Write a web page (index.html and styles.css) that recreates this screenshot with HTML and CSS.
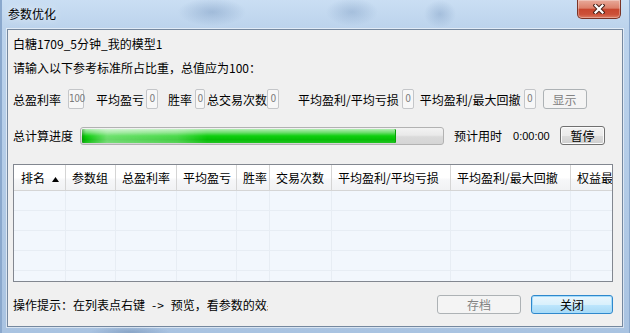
FILE: index.html
```html
<!DOCTYPE html>
<html lang="zh-CN">
<head>
    <meta charset="UTF-8">
    <title>参数优化</title>
    <link rel="stylesheet" href="styles.css">
</head>
<body>
    <div class="window">
        <!-- Title bar -->
        <div class="titlebar">
            <span class="title">参数优化</span>
            <button class="close-btn">
                <svg width="12" height="10" viewBox="0 0 12 10">
                    <path d="M2.5 1.5 L9.5 8.5 M9.5 1.5 L2.5 8.5" stroke="#4a2219" stroke-width="4.2" stroke-linecap="square"/>
                    <path d="M2.5 1.5 L9.5 8.5 M9.5 1.5 L2.5 8.5" stroke="#ffffff" stroke-width="2.2" stroke-linecap="square"/>
                </svg>
            </button>
        </div>

        <!-- Dialog body -->
        <div class="client">
            <div class="line">白糖1709_5分钟_我的模型1</div>
            <div class="line prompt">请输入以下参考标准所占比重，总值应为100：</div>

            <div class="weights">
                <span>总盈利率</span>
                <span class="box wide gap7">100</span>
                <span class="gap12">平均盈亏</span>
                <span class="box gap2">0</span>
                <span class="gap10">胜率</span>
                <span class="box narrow gap3">0</span>
                <span class="gap2">总交易次数</span>
                <span class="box">0</span>
                <span class="gap19">平均盈利/平均亏损</span>
                <span class="box gap3">0</span>
                <span class="gap6">平均盈利/最大回撤</span>
                <span class="box gap3">0</span>
                <button class="btn disabled show-btn">显示</button>
            </div>

            <div class="progress-row">
                <span>总计算进度</span>
                <div class="progress">
                    <div class="progress-fill" style="width: 87.3%"></div>
                </div>
                <span class="eta-label">预计用时</span>
                <span class="eta">0:00:00</span>
                <button class="btn pause-btn">暂停</button>
            </div>

            <!-- Result list -->
            <div class="list">
                <div class="list-head">
                    <div class="cell">排名<svg class="sort" width="7" height="5" viewBox="0 0 7 5"><path d="M3.5 0 L7 5 L0 5 Z" fill="#000"/></svg></div>
                    <div class="cell">参数组</div>
                    <div class="cell">总盈利率</div>
                    <div class="cell">平均盈亏</div>
                    <div class="cell">胜率</div>
                    <div class="cell">交易次数</div>
                    <div class="cell">平均盈利/平均亏损</div>
                    <div class="cell">平均盈利/最大回撤</div>
                    <div class="cell">权益最大回撤</div>
                </div>
                <div class="list-row"><div class="cell"></div><div class="cell"></div><div class="cell"></div><div class="cell"></div><div class="cell"></div><div class="cell"></div><div class="cell"></div><div class="cell"></div><div class="cell"></div></div>
                <div class="list-row"><div class="cell"></div><div class="cell"></div><div class="cell"></div><div class="cell"></div><div class="cell"></div><div class="cell"></div><div class="cell"></div><div class="cell"></div><div class="cell"></div></div>
                <div class="list-row"><div class="cell"></div><div class="cell"></div><div class="cell"></div><div class="cell"></div><div class="cell"></div><div class="cell"></div><div class="cell"></div><div class="cell"></div><div class="cell"></div></div>
                <div class="list-row"><div class="cell"></div><div class="cell"></div><div class="cell"></div><div class="cell"></div><div class="cell"></div><div class="cell"></div><div class="cell"></div><div class="cell"></div><div class="cell"></div></div>
                <div class="list-row"><div class="cell"></div><div class="cell"></div><div class="cell"></div><div class="cell"></div><div class="cell"></div><div class="cell"></div><div class="cell"></div><div class="cell"></div><div class="cell"></div></div>
            </div>

            <div class="footer">
                <span class="tip">操作提示：在列表点右键<span class="arrow">-&gt;</span>预览，看参数的效果</span>
                <button class="btn disabled save-btn">存档</button>
                <button class="btn default close-dlg">关闭</button>
            </div>
        </div>
    </div>
</body>
</html>
```

FILE: styles.css
```css
body {
    margin: 0;
    font-family: "Noto Sans CJK SC", "Liberation Sans", sans-serif;
    font-size: 12px;
    color: #000;
}

/* Aero frame */
.window {
    width: 630px;
    height: 333px;
    box-sizing: border-box;
    padding: 0 7px 6px 7px;
    display: flex;
    flex-direction: column;
    overflow: hidden;
    background:
        radial-gradient(ellipse 34px 14px at 212px 12px, rgba(95, 130, 175, 0.35), transparent),
        radial-gradient(ellipse 26px 14px at 352px 12px, rgba(95, 130, 175, 0.3), transparent),
        radial-gradient(ellipse 16px 14px at 440px 14px, rgba(95, 130, 175, 0.3), transparent),
        radial-gradient(ellipse 40px 6px at 130px 332px, rgba(80, 110, 150, 0.35), transparent),
        linear-gradient(to bottom, #cadef3 0, #bcd3ec 28px, #a9c3e1 100%);
    box-shadow: inset 2px 0 0 #8aa8cd, inset -1px 0 0 #8aa8cd;
}

.titlebar {
    height: 29px;
    display: flex;
    align-items: flex-start;
    flex-shrink: 0;
}

.title {
    margin: 6px 0 0 1px;
    line-height: 16px;
    text-shadow: 0 0 8px rgba(255, 255, 255, 0.9);
}

.close-btn {
    margin-left: auto;
    margin-right: 2px;
    width: 44px;
    height: 19px;
    padding: 0;
    border: 1px solid #7a3326;
    border-top: none;
    border-radius: 0 0 5px 5px;
    background: linear-gradient(to bottom, #e8aa9a 0%, #dc806a 45%, #c8472f 52%, #cc5139 80%, #dc7d64 100%);
    box-shadow: inset 0 0 0 1px rgba(255, 255, 255, 0.3);
    display: flex;
    align-items: center;
    justify-content: center;
}

/* Client area */
.client {
    flex: 1;
    border: 1px solid #75889f;
    background: #f0f0f0;
    padding: 6px 9px 0 5px;
    display: flex;
    flex-direction: column;
    box-shadow: 0 0 0 1px rgba(255, 255, 255, 0.55);
}

.line {
    height: 16px;
    line-height: 16px;
    white-space: nowrap;
}

.prompt {
    margin-top: 8px;
}

.weights {
    margin-top: 13px;
    height: 20px;
    display: flex;
    align-items: center;
    white-space: nowrap;
}

.box {
    box-sizing: border-box;
    width: 12px;
    height: 20px;
    border: 1px solid #c4c6c9;
    border-radius: 2px;
    background: #f7f7f7;
    color: #7a7a7a;
    font-family: "DejaVu Sans", sans-serif;
    font-stretch: condensed;
    font-size: 10px;
    line-height: 18px;
    text-align: center;
    letter-spacing: -0.5px;
}

.box.wide { width: 16px; }
.box.narrow { width: 10px; }

.gap2 { margin-left: 2px; }
.gap3 { margin-left: 3px; }
.gap6 { margin-left: 6px; }
.gap7 { margin-left: 7px; }
.gap10 { margin-left: 10px; }
.gap12 { margin-left: 12px; }
.gap19 { margin-left: 19px; }

/* Buttons */
.btn {
    box-sizing: border-box;
    height: 19px;
    padding: 0;
    font-family: inherit;
    font-size: 12px;
    line-height: 17px;
    color: #000;
    border: 1px solid #707070;
    border-radius: 3px;
    background: linear-gradient(to bottom, #f2f2f2 0%, #ebebeb 50%, #dddddd 51%, #cfcfcf 100%);
    box-shadow: inset 0 0 0 1px #fbfbfb;
}

.btn.disabled {
    border-color: #adb2b5;
    background: #f4f4f4;
    color: #838383;
    box-shadow: none;
}

.btn.default {
    border-color: #2f88cc;
    background: linear-gradient(to bottom, #eaf6fd 0%, #d9f0fc 50%, #bee6fd 51%, #a7d9f5 100%);
    box-shadow: inset 0 0 0 1px #a6dcfb;
}

.show-btn {
    width: 44px;
    height: 20px;
    margin-left: 7px;
}

/* Progress */
.progress-row {
    margin-top: 17px;
    height: 19px;
    display: flex;
    align-items: center;
    white-space: nowrap;
}

.progress {
    box-sizing: border-box;
    width: 364px;
    height: 18px;
    margin-left: 7px;
    padding: 1px;
    border: 1px solid #b2b2b2;
    border-radius: 3px;
    background: linear-gradient(to bottom, #f3f3f3 0%, #e9e9e9 45%, #dadada 55%, #d5d5d5 100%);
}

.progress-fill {
    height: 100%;
    border-radius: 1px;
    background:
        linear-gradient(to right, rgba(0, 90, 0, 0.35) 0, transparent 4px, rgba(255, 255, 255, 0.4) 25px, rgba(255, 255, 255, 0.25) 95px, transparent 125px),
        linear-gradient(to bottom, #b4eeb4 0%, #6ede6e 25%, #0fcf0f 50%, #06bf06 75%, #23c423 100%);
    box-shadow: inset -1px 0 0 #07a007;
}

.eta-label {
    margin-left: 10px;
}

.eta {
    margin-left: 11px;
    font-family: "Liberation Sans", sans-serif;
    font-size: 11px;
}

.pause-btn {
    width: 45px;
    margin-left: auto;
    margin-right: 8px;
}

/* List view */
.list {
    margin-top: 19px;
    height: 118px;
    box-sizing: border-box;
    border: 1px solid #828790;
    background: #f2f7fd;
    overflow: hidden;
    flex-shrink: 0;
}

.list-head,
.list-row {
    display: grid;
    grid-template-columns: 52px 50px 61px 60px 33px 62px 119px 120px 90px;
    width: 647px;
}

.list-head {
    height: 25px;
    background: linear-gradient(to bottom, #ffffff 0%, #ffffff 50%, #f6f7f9 60%, #f1f2f4 100%);
    border-bottom: 1px solid #d5d5d5;
}

.list-head .cell {
    border-right: 1px solid #d5d5d5;
    padding-left: 6px;
    line-height: 25px;
    white-space: nowrap;
    overflow: hidden;
}

.list-head .cell:first-child {
    padding-left: 7px;
}

.sort {
    margin-left: 7px;
    vertical-align: 1px;
}

.list-row {
    height: 19px;
    border-bottom: 1px solid #e7edf4;
}

.list-row .cell {
    border-right: 1px solid #e7edf4;
}

.list-head .cell,
.list-row .cell {
    box-sizing: border-box;
}

/* Footer */
.footer {
    margin-top: 13px;
    height: 19px;
    display: flex;
    align-items: center;
}

.tip {
    width: 255px;
    overflow: hidden;
    white-space: nowrap;
}

.arrow {
    margin: 0 6px 0 7px;
    letter-spacing: 1px;
}

.save-btn {
    width: 84px;
    margin-left: auto;
}

.close-dlg {
    width: 82px;
    margin-left: 10px;
}
```
